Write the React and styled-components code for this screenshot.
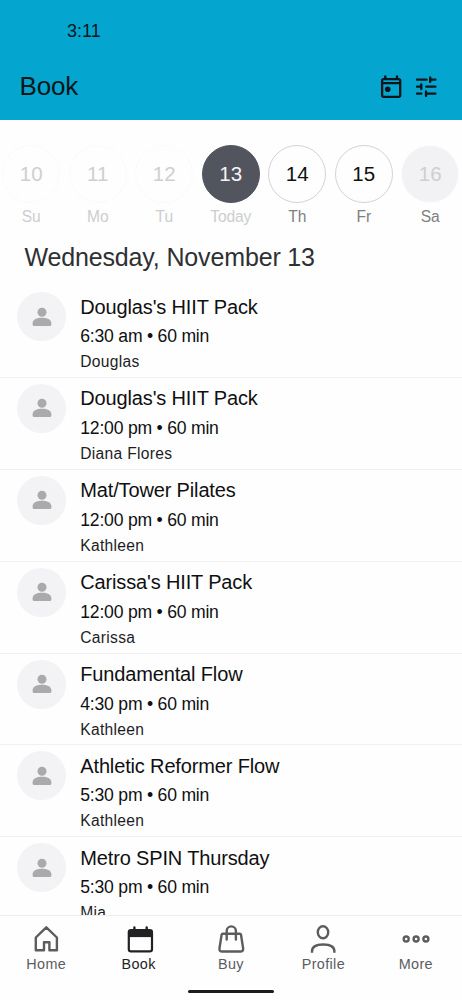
import React from 'react'
import styled, { createGlobalStyle } from 'styled-components'

const days = [
  { num: 10, label: 'Su', state: 'past' },
  { num: 11, label: 'Mo', state: 'past' },
  { num: 12, label: 'Tu', state: 'past' },
  { num: 13, label: 'Today', state: 'selected' },
  { num: 14, label: 'Th', state: 'open' },
  { num: 15, label: 'Fr', state: 'open' },
  { num: 16, label: 'Sa', state: 'closed' },
]

const classes = [
  { title: "Douglas's HIIT Pack", time: '6:30 am • 60 min', coach: 'Douglas' },
  { title: "Douglas's HIIT Pack", time: '12:00 pm • 60 min', coach: 'Diana Flores' },
  { title: 'Mat/Tower Pilates', time: '12:00 pm • 60 min', coach: 'Kathleen' },
  { title: "Carissa's HIIT Pack", time: '12:00 pm • 60 min', coach: 'Carissa' },
  { title: 'Fundamental Flow', time: '4:30 pm • 60 min', coach: 'Kathleen' },
  { title: 'Athletic Reformer Flow', time: '5:30 pm • 60 min', coach: 'Kathleen' },
  { title: 'Metro SPIN Thursday', time: '5:30 pm • 60 min', coach: 'Mia' },
]

const CalendarIcon = () => (
  <svg width="22" height="24" viewBox="0 0 22 24" fill="none" stroke="currentColor" strokeWidth="2.3">
    <rect x="2.1" y="4.2" width="18.1" height="17.7" rx="1.6" />
    <path d="M2.1 8.2h18.1M5.3 .6v4M17 .6v4" />
    <circle cx="7.7" cy="14.2" r="2.8" fill="currentColor" stroke="none" />
  </svg>
)

const TuneIcon = () => (
  <svg width="22" height="22" viewBox="0 0 22 22" fill="none" stroke="currentColor" strokeWidth="2.3" strokeLinecap="round">
    <path d="M2 3.7h9.6M15.2 3.7h5.2M15.2 1.4v4.6" />
    <path d="M2 10.7h4.300M6.300 8.400v4.600M11.200 10.700h9.200" />
    <path d="M2 17.700h4.300M11 17.700h9.400M11 15.400v4.600" />
  </svg>
)

const PersonIcon = () => (
  <svg width="20" height="20" viewBox="0 0 20 20" fill="#aaaaac">
    <circle cx="10" cy="5.2" r="4.5" />
    <path d="M.6 16.2c0-3.800 4.600-5.500 9.400-5.500s9.400 1.700 9.400 5.500v1.200q0 1.500-1.500 1.500H2.100q-1.500 0-1.500-1.500z" />
  </svg>
)

const HomeIcon = () => (
  <svg width="30" height="30" viewBox="0 0 30 30" fill="none" stroke="currentColor" strokeWidth="2.4">
    <path d="M4.800 26.200V13.500L15.300 3.300l10.600 10.200v12.700h-7.500V18.200h-5.400v8z" strokeLinejoin="round" />
  </svg>
)

const BookIcon = () => (
  <svg width="30" height="30" viewBox="0 0 30 30" fill="none" stroke="currentColor">
    <rect x="4.800" y="6.100" width="23.200" height="21.300" rx="2.200" strokeWidth="2.200" />
    <path d="M4.800 6.100H28v7H4.800z" fill="currentColor" stroke="none" />
    <path d="M10.400 3.500v4M22.700 3.500v4" strokeWidth="2.400" strokeLinecap="round" />
  </svg>
)

const BuyIcon = () => (
  <svg width="30" height="30" viewBox="0 0 30 30" fill="none" stroke="currentColor" strokeWidth="2.400" strokeLinecap="round" strokeLinejoin="round">
    <path d="M6.800 9.800h17q1 0 1.200 1l2.100 13.300q.5 3.400-2.800 3.400H6.300q-3.300 0-2.800-3.400L5.600 10.800q.2-1 1.200-1z" />
    <path d="M10.700 15.500V7a4.600 4.600 0 0 1 9.200 0v8.500" />
  </svg>
)

const ProfileIcon = () => (
  <svg width="30" height="30" viewBox="0 0 30 30" fill="none" stroke="currentColor" strokeWidth="2.400">
    <ellipse cx="15" cy="8.200" rx="5.200" ry="6" />
    <path d="M4 28.700v-1.200c0-4.500 3.500-7 11.200-7s11.200 2.500 11.200 7v1.200" />
  </svg>
)

const MoreIcon = () => (
  <svg width="30" height="30" viewBox="0 0 30 30" fill="none" stroke="currentColor" strokeWidth="2.400">
    <circle cx="5.200" cy="15" r="2.500" />
    <circle cx="15.100" cy="15" r="2.500" />
    <circle cx="24.900" cy="15" r="2.500" />
  </svg>
)

const tabs = [
  { label: 'Home', icon: <HomeIcon /> },
  { label: 'Book', icon: <BookIcon />, active: true },
  { label: 'Buy', icon: <BuyIcon /> },
  { label: 'Profile', icon: <ProfileIcon /> },
  { label: 'More', icon: <MoreIcon /> },
]

const App = () => {
  return <>
    <GlobalStyle />
    <Screen>
      <Header>
        <Clock>3:11</Clock>
        <TitleBar>
          <h1>Book</h1>
          <Actions>
            <button type="button" aria-label="calendar"><CalendarIcon /></button>
            <button type="button" aria-label="filters"><TuneIcon /></button>
          </Actions>
        </TitleBar>
      </Header>

      {/* week strip */}
      <Week>
        {days.map(({ num, label, state }) => (
          <Day key={num}>
            <DayCircle $state={state}>{num}</DayCircle>
            <DayLabel $dim={state === 'past' || state === 'selected'}>{label}</DayLabel>
          </Day>
        ))}
      </Week>
      <DateHeading>Wednesday, November 13</DateHeading>

      {/* classes */}
      <ClassList>
        {classes.map((item, index) => (
          <ClassRow key={index}>
            <Avatar><PersonIcon /></Avatar>
            <ClassInfo>
              <h3>{item.title}</h3>
              <p>{item.time}</p>
              <small>{item.coach}</small>
            </ClassInfo>
          </ClassRow>
        ))}
      </ClassList>

      {/* bottom navigation */}
      <BottomNav>
        <Tabs>
          {tabs.map(({ label, icon, active }) => (
            <Tab key={label} type="button" $active={active}>
              {icon}
              <span>{label}</span>
            </Tab>
          ))}
        </Tabs>
        <HomeBar />
      </BottomNav>
    </Screen>
  </>
}

const GlobalStyle = createGlobalStyle`
  * {
    box-sizing: border-box;
    margin: 0;
  }
  body {
    background: #fefefe;
    font-family: "Liberation Sans", Arial, sans-serif;
  }
  button {
    padding: 0;
    border: none;
    background: transparent;
    font-family: inherit;
  }
  svg {
    display: block;
  }
`

const Screen = styled.div`
  display: flex;
  flex-direction: column;
  width: 462px;
  height: 1000px;
  overflow: hidden;
`

const Header = styled.header`
  flex: none;
  height: 120px;
  padding-top: 21px;
  background: #04a6d0;
  color: #0b1519;
`

const Clock = styled.div`
  padding-left: 67px;
  font-size: 18px;
  line-height: 20px;
`

const TitleBar = styled.div`
  display: flex;
  align-items: center;
  justify-content: space-between;
  height: 50px;
  margin-top: 20px;
  padding: 0 25px 0 19.5px;
  h1 {
    padding-top: 1px;
    font-size: 26px;
    font-weight: 400;
    letter-spacing: -0.2px;
  }
`

const Actions = styled.div`
  display: flex;
  align-items: center;
  gap: 13px;
  padding-top: 1px;
  button {
    color: #0b1519;
  }
`

const Week = styled.div`
  display: grid;
  grid-template-columns: repeat(7, 66.5px);
  flex: none;
  height: 109px;
  padding-top: 25px;
  margin-left: -2px;
`

const Day = styled.div`
  display: flex;
  flex-direction: column;
  align-items: center;
`

const circleStyles = {
  past: 'border-color: #fbfbfc; color: #cfcfd1;',
  selected: 'border-color: #53555e; background: #53555e; color: #f4f4f6;',
  open: 'border-color: #d3d3d5; color: #111;',
  closed: 'border-color: #fbfafc; background: #f2f1f4; color: #cfcfd1;',
}

const DayCircle = styled.div`
  display: flex;
  align-items: center;
  justify-content: center;
  width: 58px;
  height: 58px;
  border: 1px solid;
  border-radius: 50%;
  font-size: 20.5px;
  ${({ $state }) => circleStyles[$state]}
`

const DayLabel = styled.span`
  margin-top: 4.5px;
  font-size: 15.6px;
  line-height: 18px;
  letter-spacing: -0.1px;
  color: ${({ $dim }) => ($dim ? '#cdcdcf' : '#808083')};
`

const DateHeading = styled.h2`
  flex: none;
  height: 57px;
  padding: 14px 0 0 24.5px;
  font-size: 25px;
  font-weight: 400;
  line-height: 29px;
  letter-spacing: -0.15px;
  color: #2f3032;
`

const ClassList = styled.div`
  flex: 1;
  min-height: 0;
  overflow: hidden;
`

const ClassRow = styled.div`
  display: flex;
  height: 91.9px;
  padding: 6px 17px 0;
  border-bottom: 1px solid #f1f1f2;
`

const Avatar = styled.div`
  display: flex;
  flex: none;
  align-items: center;
  justify-content: center;
  width: 49px;
  height: 49px;
  border-radius: 50%;
  background: #f3f3f5;
`

const ClassInfo = styled.div`
  padding-left: 14.3px;
  color: #101012;
  h3 {
    margin-top: 1.6px;
    font-size: 20px;
    font-weight: 400;
    line-height: 26px;
    letter-spacing: -0.15px;
  }
  p {
    margin-top: 5.4px;
    font-size: 17.6px;
    line-height: 22px;
    letter-spacing: -0.22px;
  }
  small {
    display: block;
    margin-top: 6px;
    font-size: 15.6px;
    line-height: 18px;
    letter-spacing: 0.3px;
    color: #1d1d1f;
  }
`

const BottomNav = styled.nav`
  display: flex;
  flex: none;
  flex-direction: column;
  align-items: center;
  height: 85px;
  padding-top: 8px;
  border-top: 1px solid #ededee;
`

const Tabs = styled.div`
  display: grid;
  grid-template-columns: repeat(5, 1fr);
  width: 100%;
`

const Tab = styled.button`
  display: flex;
  flex-direction: column;
  align-items: center;
  color: ${({ $active }) => ($active ? '#222224' : '#5c5c5e')};
  span {
    margin-top: 1px;
    font-size: 14.4px;
    line-height: 18px;
    letter-spacing: 0.35px;
  }
`

const HomeBar = styled.div`
  width: 86px;
  height: 3px;
  margin-top: 17px;
  border-radius: 2px;
  background: #1c1c1e;
`

export default App
